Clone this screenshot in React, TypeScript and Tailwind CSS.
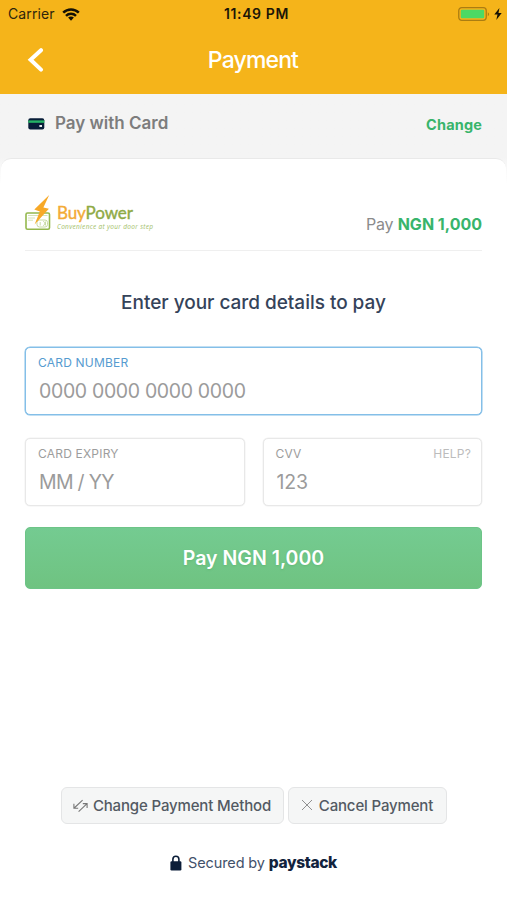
import React from "react";

function StatusBar() {
  return (
    <div className="grid h-[28px] grid-cols-3 items-center pl-[8px] pr-[5px] text-black">
      <div className="flex items-center gap-[7px]">
        <span className="text-[14px] leading-[28px] tracking-[0.1px] text-[#2e250c]">Carrier</span>
        <svg width="18" height="13" viewBox="0 0 18 13" fill="none" stroke="#151105" strokeWidth="2.5">
          <path d="M1.2 4.6C5.5 .4 12.5 .4 16.8 4.6" />
          <path d="M4 7.8C6.8 5.1 11.2 5.1 14 7.8" />
          <path d="M9 12.7 6.1 9.6C7.7 8.2 10.3 8.2 11.9 9.6Z" fill="#151105" stroke="none" />
        </svg>
      </div>
      <span className="pl-[3px] text-center text-[14px] font-semibold leading-[28px] tracking-[0.6px] text-[#1c1607]">11:49 PM</span>
      <div className="flex items-center justify-end gap-[4px]">
        <svg width="33" height="15" viewBox="0 0 33 15" fill="none">
          <rect x="1.75" y=".7" width="27.5" height="12.6" rx="3" stroke="#ab7d12" strokeWidth="1.3" />
          <rect x="3.8" y="2.8" width="23.4" height="8.4" rx="1.2" fill="#4cd964" />
          <path d="M30.8 5.2C32.6 6.1 32.6 8.3 30.8 9.2Z" fill="#ab7d12" />
        </svg>
        <svg width="8" height="13" viewBox="0 0 8 13" fill="#151105">
          <path d="M5.4 0 .3 6.6H3.5L2.3 12 7.7 4.9H4.5Z" />
        </svg>
      </div>
    </div>
  );
}

function BuyPowerLogo() {
  return (
    <div className="flex items-end">
      <svg width="26" height="38" viewBox="0 0 26 38" fill="none">
        <rect x="1" y="18" width="23.5" height="16.2" rx="1.5" stroke="#94b84e" strokeWidth="1.6" />
        <path d="M3 20.5H22.5M3 23H10M3 25.2H8" stroke="#d5e2b9" strokeWidth="1" />
        <rect x="12" y="25" width="10.5" height="7" rx="2.5" stroke="#b9d08b" strokeWidth=".8" />
        <path d="M15.2 27v3.5M18.3 26.5c2 0 2 4-.2 4M20.4 26.5v4" stroke="#b9d08b" strokeWidth=".8" />
        <path d="M24.2 0 9.3 14.6 14.8 16.4 9.6 29.5 23.9 13.8 18.4 12.4Z" fill="#f7a928" />
      </svg>
      <div className="ml-[6px] flex flex-col pb-[2px]">
        <span className="font-['Lato','Open_Sans',sans-serif] text-[17px] font-normal leading-[18px] tracking-[-0.1px] text-[#8faa45] [-webkit-text-stroke:0.4px_currentColor]">
          <span className="text-[#f3ab35]">Buy</span>Power
        </span>
        <span className="whitespace-nowrap font-['Open_Sans',sans-serif] text-[6.5px] italic leading-[9px] tracking-[0.32px] text-[#a3c069]">
          Convenience at your door step
        </span>
      </div>
    </div>
  );
}

interface FieldProps {
  label: string;
  value: string;
  help?: string;
  active?: boolean;
  valueSpacing?: string;
}

function Field({ label, value, help, active, valueSpacing = "" }: FieldProps) {
  const border = active
    ? "border-[#84bfe8] shadow-[0_0_0_0.5px_#84bfe8]"
    : "border-[#e8e8e8] shadow-[0_0_0_0.5px_#f1f1f1]";
  const color = active ? "text-[#569bd0]" : "text-[#9d9d9d]";
  return (
    <div className={"flex h-[68px] flex-1 flex-col rounded-[5px] border bg-white pl-[12px] pr-[10px] pt-[6px] " + border}>
      <div className={"flex justify-between text-[12px] leading-[18px] tracking-[0.2px] " + color}>
        <span>{label}</span>
        {help && <span className="text-[#bcbcbc]">{help}</span>}
      </div>
      <span className={"ml-px mt-[5px] text-[19.5px] leading-[28px] text-[#9b9b9b] " + valueSpacing}>{value}</span>
    </div>
  );
}

export default function App() {
  return (
    <div className="flex h-[900px] w-[507px] flex-col overflow-hidden bg-white font-['Inter',sans-serif]">
      <header className="h-[94px] bg-[#f5b41a]">
        <StatusBar />
        <div className="grid h-[64px] grid-cols-3 items-center pl-[27px] pr-[28px]">
          <svg width="17" height="25" viewBox="0 0 17 25" fill="none" stroke="white" strokeWidth="4" strokeLinecap="round" strokeLinejoin="miter">
            <path d="M14 2.2 3.6 11.8 14 21.6" />
          </svg>
          <h1 className="text-center text-[23px] font-medium tracking-[-0.85px] text-white">Payment</h1>
        </div>
      </header>

      <div className="h-[90px] bg-linear-to-b from-[#f4f4f4] from-70% to-white">
        <div className="flex h-[64px] items-center justify-between pl-[28px] pr-[25px]">
          <div className="flex items-center pb-[4px]">
            <svg width="17" height="12" viewBox="0 0 17 12">
              <rect x=".3" y=".3" width="16" height="11.2" rx="2" fill="#081d38" />
              <rect x=".3" y="2.4" width="16" height="2.4" fill="#25b365" />
              <rect x="11.4" y="7" width="2.6" height="2" fill="#e9edf1" />
            </svg>
            <span className="ml-[10px] text-[17px] font-semibold text-[#7d7d7d]">Pay with Card</span>
          </div>
          <span className="pb-[3px] text-[14.5px] font-bold tracking-[0.15px] text-[#38b46b]">Change</span>
        </div>
        <div className="mx-px h-[40px] rounded-t-[10px] border-t border-[#e9e9e9] bg-white" />
      </div>

      <main className="flex flex-col px-[25px]">
        <div className="flex h-[67px] items-start justify-between border-b border-[#efefef] pt-[11px]">
          <BuyPowerLogo />
          <div className="mt-[17px] text-[16px] leading-[24px] tracking-[-0.2px] text-[#8b8b8b]">
            Pay <span className="font-bold tracking-[0px] text-[#38b46b]">NGN 1,000</span>
          </div>
        </div>
        <h2 className="mt-[38px] text-center text-[19px] font-medium leading-[28px] tracking-[-0.03px] text-[#35435a]">Enter your card details to pay</h2>
        <div className="mt-[30px] flex">
          <Field label="CARD NUMBER" value="0000 0000 0000 0000" valueSpacing="tracking-[-0.35px]" active />
        </div>
        <div className="mt-[23px] flex gap-[18px]">
          <Field label="CARD EXPIRY" value="MM / YY" valueSpacing="tracking-[-0.7px]" />
          <Field label="CVV" value="123" help="HELP?" valueSpacing="tracking-[-0.1px]" />
        </div>
        <button className="mt-[21px] h-[62px] rounded-[5px] border border-[#6dc487] bg-linear-to-b from-[#74cb91] to-[#6fc381] pt-px text-[19.5px] font-semibold text-white [text-shadow:0_1px_2px_#4aa76266]">
          Pay NGN 1,000
        </button>
      </main>

      <footer className="mt-auto flex h-[113px] flex-col items-center">
        <div className="flex gap-[4px]">
          <button className="flex h-[37px] w-[223px] items-center justify-center gap-[5px] whitespace-nowrap rounded-[6px] border border-[#e4e5e6] bg-[#f5f6f6] pt-px text-[15px] font-medium tracking-[-0.15px] text-[#535a63]">
            <svg width="15" height="14" viewBox="0 0 15 14" fill="none" stroke="#777" strokeWidth="1.1">
              <path d="M9.6 1.2 1.2 9M.9 4.8V9.3H5.2M5.6 12.6 13.8 4.9M9.8 4.6H14.1V9" />
            </svg>
            Change Payment Method
          </button>
          <button className="flex h-[37px] w-[159px] items-center justify-center gap-[6px] whitespace-nowrap rounded-[6px] border border-[#e4e5e6] bg-[#f5f6f6] pt-px text-[15px] font-medium tracking-[-0.15px] text-[#535a63]">
            <svg className="mb-[2px]" width="12" height="12" viewBox="0 0 12 12" stroke="#909090" strokeWidth="1">
              <path d="M1 1 11 11M11 1 1 11" />
            </svg>
            Cancel Payment
          </button>
        </div>
        <div className="mt-[27px] flex h-[24px] items-center whitespace-nowrap text-[#12233d]">
          <svg width="12" height="16" viewBox="0 0 12 16">
            <rect x=".4" y="6.2" width="11" height="9.2" rx="1.2" fill="#0b1d38" />
            <path d="M2.9 7V4.2a3 3 0 0 1 6 0V7" fill="none" stroke="#0b1d38" strokeWidth="1.6" />
          </svg>
          <span className="ml-[6px] text-[14.5px] tracking-[-0.12px] text-[#42516a]">Secured by</span>
          <span className="ml-[4px] text-[15.5px] font-extrabold tracking-[-0.35px]">paystack</span>
        </div>
      </footer>
    </div>
  );
}
